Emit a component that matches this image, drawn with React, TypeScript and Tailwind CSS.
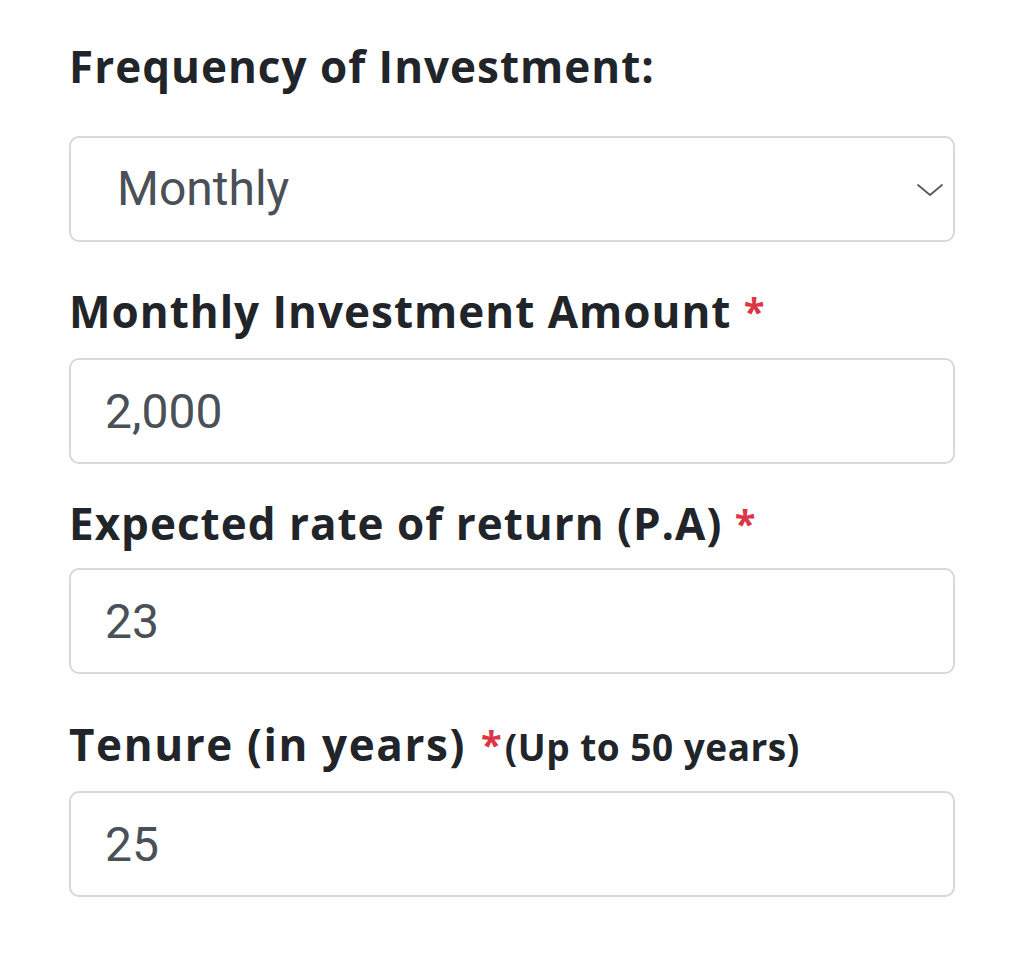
import React from "react";

const labelCls =
  "block h-[48px] text-[44px] leading-[48px] font-bold text-[#212529] whitespace-nowrap";
const inputCls =
  "block w-full h-[106px] rounded-[10px] border-2 border-[#d5d8dc] bg-white pl-[34px] pr-4 text-[48px] text-[#495057] outline-none";

function Star({ className = "" }: { className?: string }) {
  return <span className={"text-[#dc3545] text-[38px] leading-[48px] align-top " + className}>*</span>;
}

export default function App() {
  return (
    <div className="min-h-[964px] bg-white px-[69px] pt-[42px]" style={{ fontFamily: "'Open Sans', 'Noto Sans', sans-serif" }}>
      <label className={labelCls + " tracking-[1px]"}>Frequency of Investment:</label>
      <div className="relative mt-[46px]">
        <select
          defaultValue="Monthly"
          className="block w-full h-[106px] appearance-none rounded-[10px] border-2 border-[#d5d8dc] bg-white pl-[46px] pr-16 text-[48px] text-[#495057] outline-none"
          style={{ fontFamily: "Roboto, sans-serif" }}
        >
          <option>Monthly</option>
          <option>Quarterly</option>
          <option>Yearly</option>
        </select>
        <svg
          className="pointer-events-none absolute right-[11px] top-[47px]"
          width="28"
          height="14"
          viewBox="0 0 28 14"
          fill="none"
        >
          <path d="M2 2 L14 12 L26 2" stroke="#555b61" strokeWidth="1.8" strokeLinecap="round" strokeLinejoin="round" />
        </svg>
      </div>

      <label className={labelCls + " mt-[45px] tracking-[1px]"}>
        Monthly Investment Amount <Star />
      </label>
      <input className={inputCls + " mt-[23px]"} defaultValue="2,000" style={{ fontFamily: "Roboto, sans-serif" }} />

      <label className={labelCls + " mt-[35px] tracking-[1px]"}>
        Expected rate of return (P.A) <Star />
      </label>
      <input className={inputCls + " mt-[21px]"} defaultValue="23" style={{ fontFamily: "Roboto, sans-serif" }} />

      <label className={labelCls + " mt-[46px]"}>
        <span className="tracking-[1.6px]">Tenure (in years) </span>
        <Star className="ml-[2px]" />
        <span className="ml-[3px] text-[37px] leading-[48px] tracking-[0.5px]">(Up to 50 years)</span>
      </label>
      <input className={inputCls + " mt-[23px]"} defaultValue="25" style={{ fontFamily: "Roboto, sans-serif" }} />
    </div>
  );
}
